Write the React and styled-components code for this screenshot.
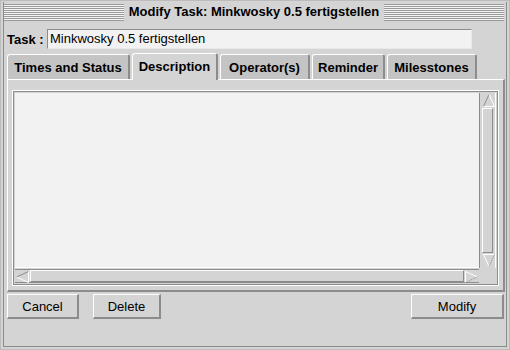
import React from 'react'
import styled, { createGlobalStyle } from 'styled-components'

const GlobalStyle = createGlobalStyle`
  html, body { margin: 0; padding: 0; background: #d4d4d4; }
  body { font-family: "Liberation Sans", Arial, sans-serif; color: #000; }
  * { box-sizing: border-box; }
`

const Window = styled.div`
  width: 510px;
  height: 350px;
  background: #d4d4d4;
  border: 1px solid #bcbcbc;
  padding: 1px 2px 2px 2px;
  display: flex;
`

const Frame = styled.div`
  flex: 1;
  display: flex;
  flex-direction: column;
  border: 1px solid #8c8c8c;
  border-top: none;
`

const TitleBar = styled.div`
  height: 20px;
  display: flex;
  align-items: center;
  padding-right: 2px;
`

const Stripes = styled.div`
  flex: 1;
  height: 17px;
  margin-top: 1px;
  background: repeating-linear-gradient(to bottom, #9a9a9a 0 1px, #f4f4f4 1px 2px);
`

const TitleText = styled.div`
  padding: 0 5px;
  font-size: 13px;
  font-weight: bold;
  line-height: 20px;
  white-space: nowrap;
`

const Body = styled.div`
  flex: 1;
  display: flex;
  flex-direction: column;
  padding: 0 1px 0 3px;
`

const TaskRow = styled.div`
  margin-top: 7px;
  height: 20px;
  display: flex;
  align-items: center;
`

const Label = styled.span`
  font-size: 13px;
  font-weight: bold;
  width: 40px;
`

const TaskInput = styled.div`
  width: 425px;
  height: 20px;
  background: #f2f2f2;
  border: 1px solid #8c8c8c;
  border-right-color: #e8e8e8;
  border-bottom-color: #e8e8e8;
  font-size: 13px;
  line-height: 18px;
  padding-left: 2px;
  white-space: nowrap;
`

const TabRow = styled.div`
  margin-top: 4px;
  height: 26px;
  display: flex;
  align-items: flex-end;
  gap: 2px;
  position: relative;
  z-index: 1;
`

const Tab = styled.div`
  width: ${p => p.$w}px;
  height: ${p => (p.$active ? 27 : 25)}px;
  margin-bottom: ${p => (p.$active ? -1 : 0)}px;
  background: ${p => (p.$active ? '#d4d4d4' : '#c4c4c4')};
  border-left: 1px solid #fff;
  border-top: 1px solid #fff;
  border-right: 2px solid #8c8c8c;
  border-radius: 3px 3px 0 0;
  font-size: 13px;
  font-weight: bold;
  display: flex;
  align-items: center;
  justify-content: center;
  padding-bottom: ${p => (p.$active ? 2 : 0)}px;
  white-space: nowrap;
`

const Panel = styled.div`
  height: 213px;
  border-top: 1px solid #fff;
  border-left: 1px solid #fff;
  border-right: 2px solid #8c8c8c;
  border-bottom: 2px solid #8c8c8c;
  padding: 10px 4px 4px 4px;
  display: flex;
`

const TextFrame = styled.div`
  flex: 1;
  border: 1px solid #fff;
  box-shadow: inset 0 0 0 1px #8c8c8c;
  padding: 2px;
  display: grid;
  grid-template-columns: 1fr 17px;
  grid-template-rows: 1fr 15px;
`

const TextArea = styled.div`
  background: #f2f2f2;
  border-bottom: 1px solid #fff;
`

const VScroll = styled.div`
  border-left: 1px solid #8c8c8c;
  border-right: 1px solid #fff;
  display: flex;
  flex-direction: column;
  padding: 0 2px;
`

const HScroll = styled.div`
  border-top: 1px solid #8c8c8c;
  border-bottom: 1px solid #8c8c8c;
  margin-top: 1px;
  display: flex;
  padding: 0;
`

const Thumb = styled.div`
  flex: 1;
  border: 1px solid #8c8c8c;
  border-top-color: #fff;
  border-left-color: #fff;
  background: #d4d4d4;
`

const ArrowBox = styled.div`
  width: ${p => p.$w}px;
  height: ${p => p.$h}px;
  flex: none;
  display: flex;
  align-items: center;
  justify-content: center;
`

const ButtonRow = styled.div`
  margin-top: 2px;
  display: flex;
  gap: 14px;
  padding-right: 1px;
`

const Button = styled.div`
  width: ${p => p.$w}px;
  height: 25px;
  border: 2px solid #8c8c8c;
  border-top: 1px solid #fff;
  border-left: 1px solid #fff;
  font-size: 13px;
  display: flex;
  align-items: center;
  justify-content: center;
  margin-left: ${p => (p.$right ? 'auto' : '0')};
`

const Arrow = ({ dir }) => {
  if (dir === 'up')
    return (
      <svg width="12" height="13" viewBox="0 0 12 13">
        <path d="M6 0.5 L0.5 12.5" stroke="#8c8c8c" fill="none" />
        <path d="M6 0.5 L11.5 12.5 L0.5 12.5" stroke="#fff" fill="none" />
      </svg>
    )
  if (dir === 'down')
    return (
      <svg width="12" height="13" viewBox="0 0 12 13">
        <path d="M0.5 0.5 L11.5 0.5 M0.5 0.5 L6 12.5" stroke="#fff" fill="none" />
        <path d="M11.5 0.5 L6 12.5" stroke="#8c8c8c" strokeDasharray="1 1" fill="none" />
      </svg>
    )
  if (dir === 'left')
    return (
      <svg width="13" height="12" viewBox="0 0 13 12">
        <path d="M0.5 6 L12.5 0.5" stroke="#8c8c8c" fill="none" />
        <path d="M0.5 6 L12.5 11.5 L12.5 0.5" stroke="#fff" fill="none" />
      </svg>
    )
  return (
    <svg width="13" height="12" viewBox="0 0 13 12">
      <path d="M0.5 0.5 L0.5 11.5 M0.5 0.5 L12.5 6" stroke="#fff" fill="none" />
      <path d="M12.5 6 L0.5 11.5" stroke="#8c8c8c" strokeDasharray="1 1" fill="none" />
    </svg>
  )
}

const tabs = [
  { label: 'Times and Status', w: 123 },
  { label: 'Description', w: 86, active: true },
  { label: 'Operator(s)', w: 90 },
  { label: 'Reminder', w: 73 },
  { label: 'Milesstones', w: 90 },
]

export default function App() {
  return (
    <>
      <GlobalStyle />
      <Window>
        <Frame>
          <TitleBar>
            <Stripes />
            <TitleText>Modify Task: Minkwosky 0.5 fertigstellen</TitleText>
            <Stripes />
          </TitleBar>
          <Body>
            <TaskRow>
              <Label>Task :</Label>
              <TaskInput>Minkwosky 0.5 fertigstellen</TaskInput>
            </TaskRow>
            <TabRow>
              {tabs.map(t => (
                <Tab key={t.label} $w={t.w} $active={t.active}>{t.label}</Tab>
              ))}
            </TabRow>
            <Panel>
              <TextFrame>
                <TextArea />
                <VScroll>
                  <ArrowBox $w={13} $h={15}><Arrow dir="up" /></ArrowBox>
                  <Thumb />
                  <ArrowBox $w={13} $h={15}><Arrow dir="down" /></ArrowBox>
                </VScroll>
                <HScroll>
                  <ArrowBox $w={15} $h={13}><Arrow dir="left" /></ArrowBox>
                  <Thumb />
                  <ArrowBox $w={15} $h={13}><Arrow dir="right" /></ArrowBox>
                </HScroll>
                <div />
              </TextFrame>
            </Panel>
            <ButtonRow>
              <Button $w={72}>Cancel</Button>
              <Button $w={68}>Delete</Button>
              <Button $w={93} $right>Modify</Button>
            </ButtonRow>
          </Body>
        </Frame>
      </Window>
    </>
  )
}
